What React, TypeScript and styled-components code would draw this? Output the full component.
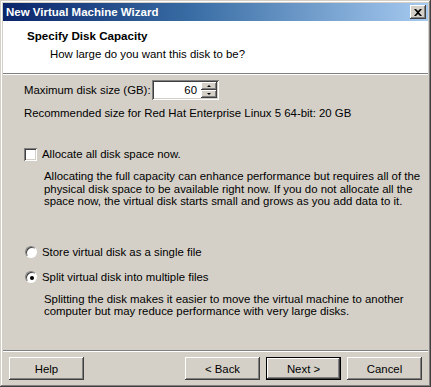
import React from 'react';
import styled, { createGlobalStyle } from 'styled-components';

const GlobalStyle = createGlobalStyle`
  html, body {
    margin: 0;
    padding: 0;
    background: #d4d0c8;
  }
  * {
    box-sizing: border-box;
  }
`;

const FONT = `'Liberation Sans', Arial, sans-serif`;

const Window = styled.div`
  width: 431px;
  height: 387px;
  padding: 3px;
  display: flex;
  flex-direction: column;
  background: #d4d0c8;
  font-family: ${FONT};
  font-size: 11.4px;
  color: #000;
  box-shadow: inset -1px -1px #404040, inset 1px 1px #d4d0c8, inset -2px -2px #808080, inset 2px 2px #ffffff;
`;

const TitleBar = styled.div`
  height: 18px;
  flex: none;
  display: flex;
  align-items: center;
  justify-content: space-between;
  padding: 0 2px 0 3px;
  background: linear-gradient(to right, #0a246a 0%, #3a6ea5 45%, #a6caf0 100%);
`;

const TitleText = styled.span`
  color: #fff;
  font-weight: bold;
  font-size: 11.5px;
`;

const CloseButton = styled.div`
  width: 16px;
  height: 14px;
  display: flex;
  align-items: center;
  justify-content: center;
  background: #d4d0c8;
  box-shadow: inset -1px -1px #404040, inset 1px 1px #ffffff, inset -2px -2px #808080;
`;

const Header = styled.div`
  height: 52px;
  flex: none;
  background: #fff;
  padding: 8px 0 0 24px;
`;

const HeaderTitle = styled.div`
  font-weight: bold;
  font-size: 11.6px;
  line-height: 14px;
`;

const HeaderSub = styled.div`
  margin: 4px 0 0 23px;
  line-height: 14px;
`;

const Separator = styled.div`
  height: 2px;
  flex: none;
  border-top: 1px solid #808080;
  border-bottom: 1px solid #ffffff;
`;

const Body = styled.div`
  flex: 1;
  display: flex;
  flex-direction: column;
  padding-left: 21px;
`;

const Row = styled.div<{ $top: number }>`
  display: flex;
  align-items: center;
  margin-top: ${(p) => p.$top}px;
  line-height: 13px;
  white-space: nowrap;
`;

const Label = styled.span`
  width: 128px;
`;

const SpinBox = styled.div`
  width: 67px;
  height: 20px;
  display: flex;
  padding: 2px;
  background: #fff;
  box-shadow: inset 1px 1px #808080, inset -1px -1px #ffffff, inset 2px 2px #404040, inset -2px -2px #d4d0c8;
`;

const SpinValue = styled.div`
  flex: 1;
  text-align: right;
  padding-right: 4px;
  line-height: 16px;
`;

const SpinButtons = styled.div`
  width: 16px;
  display: flex;
  flex-direction: column;
`;

const SpinButton = styled.div`
  flex: 1;
  display: flex;
  align-items: center;
  justify-content: center;
  background: #d4d0c8;
  box-shadow: inset -1px -1px #404040, inset 1px 1px #ffffff, inset -2px -2px #808080;
`;

const Arrow = styled.div<{ $down?: boolean }>`
  width: 0;
  height: 0;
  border-left: 2px solid transparent;
  border-right: 2px solid transparent;
  ${(p) => (p.$down ? 'border-top: 2px solid #000;' : 'border-bottom: 2px solid #000;')}
`;

const CheckBox = styled.div`
  width: 13px;
  height: 13px;
  margin-right: 5px;
  background: #fff;
  box-shadow: inset 1px 1px #808080, inset -1px -1px #ffffff, inset 2px 2px #404040, inset -2px -2px #d4d0c8;
`;

const Radio = styled.div<{ $checked?: boolean }>`
  width: 12px;
  height: 12px;
  margin: 0 5px 0 1px;
  border-radius: 50%;
  background: #fff;
  border: 1px solid;
  border-color: #808080 #ffffff #ffffff #808080;
  box-shadow: inset 1px 1px #404040;
  display: flex;
  align-items: center;
  justify-content: center;
  &::after {
    content: '';
    display: ${(p) => (p.$checked ? 'block' : 'none')};
    width: 4px;
    height: 4px;
    border-radius: 50%;
    background: #000;
    margin: 1px 0 0 1px;
  }
`;

const Paragraph = styled.p<{ $top: number }>`
  margin: ${(p) => p.$top}px 0 0 20px;
  line-height: 12.5px;
  white-space: nowrap;
`;

const Footer = styled.div`
  height: 32px;
  flex: none;
  display: flex;
  align-items: flex-start;
  padding: 5px 3px 0 6px;
`;

const Button = styled.button<{ $default?: boolean; $push?: boolean }>`
  width: 75px;
  height: 23px;
  margin-left: ${(p) => (p.$push ? 'auto' : '0')};
  margin-right: 6px;
  border: ${(p) => (p.$default ? '1px solid #000' : 'none')};
  padding: 0;
  background: #d4d0c8;
  font-family: ${FONT};
  font-size: 11.4px;
  color: #000;
  box-shadow: inset -1px -1px #404040, inset 1px 1px #ffffff, inset -2px -2px #808080;
  &:last-child {
    margin-right: 3px;
  }
`;

export default function App() {
  return (
    <>
      <GlobalStyle />
      <Window>
        <TitleBar>
          <TitleText>New Virtual Machine Wizard</TitleText>
          <CloseButton>
            <svg width="8" height="7" viewBox="0 0 8 7">
              <path d="M0 0h2l2 2 2-2h2L5 3.5 8 7H6L4 5 2 7H0l3-3.5z" fill="#000" />
            </svg>
          </CloseButton>
        </TitleBar>
        <Header>
          <HeaderTitle>Specify Disk Capacity</HeaderTitle>
          <HeaderSub>How large do you want this disk to be?</HeaderSub>
        </Header>
        <Separator />
        <Body>
          <Row $top={5}>
            <Label>Maximum disk size (GB):</Label>
            <SpinBox>
              <SpinValue>60</SpinValue>
              <SpinButtons>
                <SpinButton>
                  <Arrow />
                </SpinButton>
                <SpinButton>
                  <Arrow $down />
                </SpinButton>
              </SpinButtons>
            </SpinBox>
          </Row>
          <Row $top={7}>Recommended size for Red Hat Enterprise Linux 5 64-bit: 20 GB</Row>
          <Row $top={28}>
            <CheckBox />
            Allocate all disk space now.
          </Row>
          <Paragraph $top={9}>
            Allocating the full capacity can enhance performance but requires all of the
            <br />
            physical disk space to be available right now. If you do not allocate all the
            <br />
            space now, the virtual disk starts small and grows as you add data to it.
          </Paragraph>
          <Row $top={38}>
            <Radio />
            Store virtual disk as a single file
          </Row>
          <Row $top={12}>
            <Radio $checked />
            Split virtual disk into multiple files
          </Row>
          <Paragraph $top={9}>
            Splitting the disk makes it easier to move the virtual machine to another
            <br />
            computer but may reduce performance with very large disks.
          </Paragraph>
        </Body>
        <Separator />
        <Footer>
          <Button>Help</Button>
          <Button $push>&lt; Back</Button>
          <Button $default>Next &gt;</Button>
          <Button>Cancel</Button>
        </Footer>
      </Window>
    </>
  );
}
